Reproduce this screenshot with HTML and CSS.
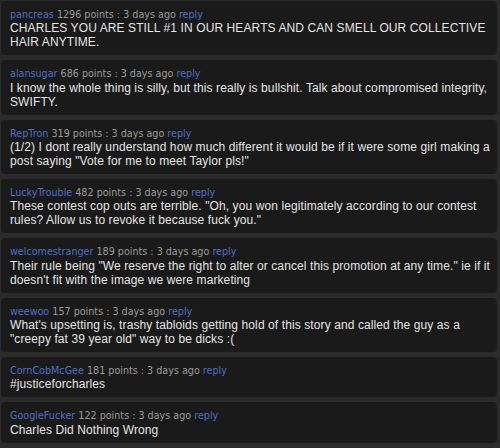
FILE: index.html
```html
<!DOCTYPE html>
<html>
<head>
<meta charset="utf-8">
<link rel="stylesheet" href="styles.css">
</head>
<body>
<div class="list">
  <div class="card">
    <div class="meta"><a class="user">pancreas</a> 1296 points : 3 days ago <a class="reply">reply</a></div>
    <div class="body">CHARLES YOU ARE STILL #1 IN OUR HEARTS AND CAN SMELL OUR COLLECTIVE HAIR ANYTIME.</div>
  </div>
  <div class="card">
    <div class="meta"><a class="user">alansugar</a> 686 points : 3 days ago <a class="reply">reply</a></div>
    <div class="body">I know the whole thing is silly, but this really is bullshit. Talk about compromised integrity, SWIFTY.</div>
  </div>
  <div class="card">
    <div class="meta"><a class="user">RepTron</a> 319 points : 3 days ago <a class="reply">reply</a></div>
    <div class="body">(1/2) I dont really understand how much different it would be if it were some girl making a post saying "Vote for me to meet Taylor pls!"</div>
  </div>
  <div class="card">
    <div class="meta"><a class="user">LuckyTrouble</a> 482 points : 3 days ago <a class="reply">reply</a></div>
    <div class="body">These contest cop outs are terrible. "Oh, you won legitimately according to our contest rules? Allow us to revoke it because fuck you."</div>
  </div>
  <div class="card">
    <div class="meta"><a class="user">welcomestranger</a> 189 points : 3 days ago <a class="reply">reply</a></div>
    <div class="body">Their rule being "We reserve the right to alter or cancel this promotion at any time." ie if it doesn't fit with the image we were marketing</div>
  </div>
  <div class="card">
    <div class="meta"><a class="user">weewoo</a> 157 points : 3 days ago <a class="reply">reply</a></div>
    <div class="body">What's upsetting is, trashy tabloids getting hold of this story and called the guy as a "creepy fat 39 year old" way to be dicks :(</div>
  </div>
  <div class="card">
    <div class="meta"><a class="user">CornCobMcGee</a> 181 points : 3 days ago <a class="reply">reply</a></div>
    <div class="body">#justiceforcharles</div>
  </div>
  <div class="card">
    <div class="meta"><a class="user">GoogleFucker</a> 122 points : 3 days ago <a class="reply">reply</a></div>
    <div class="body">Charles Did Nothing Wrong</div>
  </div>
</div>
</body>
</html>
```
FILE: styles.css
```css
html, body {
  margin: 0;
  background: #2b2b2b;
}
body {
  padding: 1px 3px 0 1px;
}
.list {
  display: flex;
  flex-direction: column;
  gap: 5px;
}
.card {
  background: #1a1a1a;
  border-radius: 4px;
  padding: 8px 7px 6px 9px;
}
.meta {
  font-family: "DejaVu Sans", Verdana, sans-serif;
  font-size: 9.6px;
  line-height: 12.33px;
  color: #9a9a9a;
}
.user, .reply {
  color: #4f6fc4;
}
.body {
  font-family: "Liberation Sans", Arial, sans-serif;
  font-size: 12px;
  line-height: 14px;
  letter-spacing: 0.1px;
  color: #e4e4e4;
}
```
